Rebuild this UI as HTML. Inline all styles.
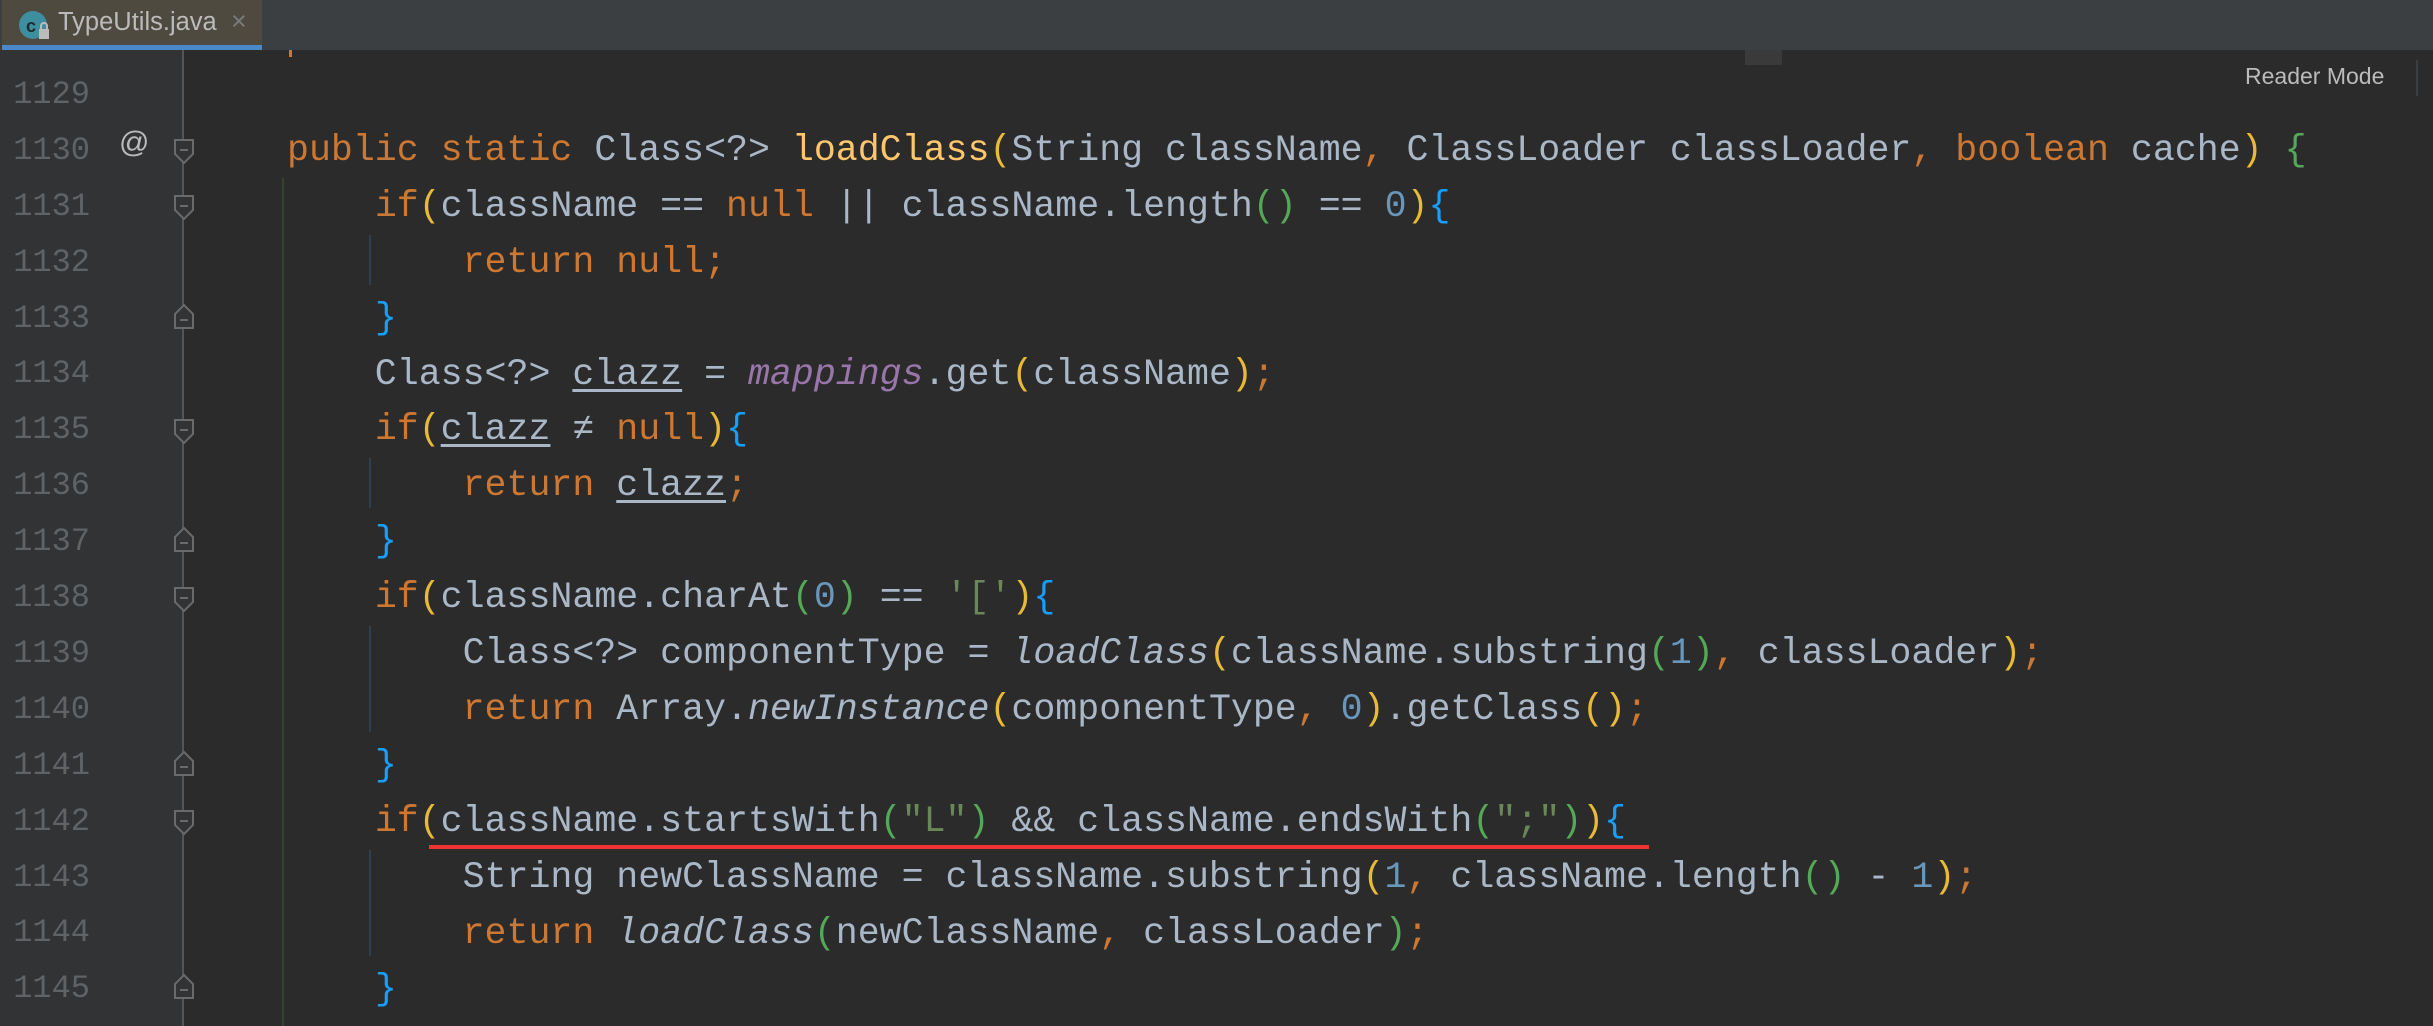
<!DOCTYPE html>
<html style="width:2433px;height:1026px;overflow:hidden"><head><meta charset="utf-8"><style>
body{margin:0;width:2433px;height:1026px;overflow:hidden;background:#2b2b2b;position:relative;font-family:"Liberation Mono",monospace}
.tabbar{position:absolute;left:0;top:0;width:2433px;height:50px;background:#3c3f41}
.tab{position:absolute;left:2px;top:0;width:260px;height:45px;background:#4e4a40}
.tabline{position:absolute;left:2px;top:45px;width:260px;height:5px;background:#4a88c7}
.gutter{position:absolute;left:0;top:50px;width:183px;height:976px;background:#313335}
.gline{position:absolute;left:182px;top:50px;width:2px;height:976px;background:#555}
.ln{position:absolute;left:0;width:90px;text-align:right;color:#606366;font-size:32px;line-height:56px}
.code{position:absolute;left:287px;top:67px;height:959px;overflow:hidden;font-size:36.6px;line-height:55.9px;color:#a9b7c6;white-space:pre}
.k{color:#cc7832}.y{color:#e8ba36}.g{color:#54a857}.b{color:#179fff}.n{color:#6897bb}.s{color:#6a8759}.p{color:#9876aa;font-style:italic}.i{font-style:italic}.u{text-decoration:underline;text-underline-offset:5px}
.guide{position:absolute;width:2px}
</style></head><body>
<div class="tabbar"></div>
<div class="tab"></div>
<div class="tabline"></div>
<svg style="position:absolute;left:18px;top:10px" width="34" height="32"><circle cx="15" cy="15" r="14" fill="#3d8fa0"/><text x="8" y="22" font-family="Liberation Sans" font-size="18" font-weight="bold" fill="#1f2a30">c</text><rect x="21" y="19" width="10" height="10" fill="#bbb"/><path d="M23 19v-3a3 3 0 0 1 6 0v3" stroke="#bbb" stroke-width="2" fill="none"/></svg>
<div style="position:absolute;left:58px;top:8px;font-family:'Liberation Sans',sans-serif;font-size:25.5px;color:#bbbbbb">TypeUtils.java</div>
<div style="position:absolute;left:231px;top:6px;font-family:'Liberation Sans',sans-serif;font-size:27px;color:#7a7a7a">×</div>
<div class="gutter"></div>
<div class="gline"></div>
<div style="position:absolute;left:289px;top:50px;width:3px;height:7px;background:#cc7832"></div>
<div style="position:absolute;left:1745px;top:50px;width:37px;height:15px;background:#3a3a3a"></div>
<div style="position:absolute;left:2245px;top:63px;font-family:'Liberation Sans',sans-serif;font-size:23px;color:#bbbbbb">Reader Mode</div>
<div style="position:absolute;left:2416px;top:60px;width:2px;height:36px;background:#3c3f41"></div>

<div class="ln" style="top:67px">1129</div>
<div class="ln" style="top:123px">1130</div>
<div class="ln" style="top:179px">1131</div>
<div class="ln" style="top:235px">1132</div>
<div class="ln" style="top:291px">1133</div>
<div class="ln" style="top:346px">1134</div>
<div class="ln" style="top:402px">1135</div>
<div class="ln" style="top:458px">1136</div>
<div class="ln" style="top:514px">1137</div>
<div class="ln" style="top:570px">1138</div>
<div class="ln" style="top:626px">1139</div>
<div class="ln" style="top:682px">1140</div>
<div class="ln" style="top:738px">1141</div>
<div class="ln" style="top:794px">1142</div>
<div class="ln" style="top:850px">1143</div>
<div class="ln" style="top:905px">1144</div>
<div class="ln" style="top:961px">1145</div>
<div style="position:absolute;left:119px;top:126px;font-family:'Liberation Sans',sans-serif;font-size:30px;color:#bbbbbb">@</div>

<svg style="position:absolute;left:170px;top:0" width="30" height="1026">
<g fill="#313335" stroke="#6a6a6a" stroke-width="2">
<path d="M5 140h18v14l-9 9l-9-9z"/><path d="M5 196h18v14l-9 9l-9-9z"/><path d="M5 420h18v14l-9 9l-9-9z"/><path d="M5 588h18v14l-9 9l-9-9z"/><path d="M5 811h18v14l-9 9l-9-9z"/>
<path d="M5 328h18v-14l-9-9l-9 9z"/><path d="M5 551h18v-14l-9-9l-9 9z"/><path d="M5 775h18v-14l-9-9l-9 9z"/><path d="M5 998h18v-14l-9-9l-9 9z"/>
</g>
<g stroke="#6a6a6a" stroke-width="2"><path d="M10 150h8M10 206h8M10 430h8M10 598h8M10 821h8M10 320h8M10 543h8M10 767h8M10 990h8"/></g>
</svg>

<div class="guide" style="left:282px;top:178px;height:848px;background:#34432f"></div>
<div class="guide" style="left:369px;top:235px;height:50px;background:#2f3f50"></div>
<div class="guide" style="left:369px;top:458px;height:50px;background:#2f3f50"></div>
<div class="guide" style="left:369px;top:626px;height:106px;background:#2f3f50"></div>
<div class="guide" style="left:369px;top:850px;height:106px;background:#2f3f50"></div>

<div class="code">
<span class="k">public static </span>Class&lt;?&gt; <span style="color:#ffc66d">loadClass</span><span class="y">(</span>String className<span class="k">, </span>ClassLoader classLoader<span class="k">, boolean </span>cache<span class="y">)</span> <span class="g">{</span>
    <span class="k">if</span><span class="y">(</span>className == <span class="k">null</span> || className.length<span class="g">()</span> == <span class="n">0</span><span class="y">)</span><span class="b">{</span>
        <span class="k">return null;</span>
    <span class="b">}</span>
    Class&lt;?&gt; <span class="u">clazz</span> = <span class="p">mappings</span>.get<span class="y">(</span>className<span class="y">)</span><span class="k">;</span>
    <span class="k">if</span><span class="y">(</span><span class="u">clazz</span> ≠ <span class="k">null</span><span class="y">)</span><span class="b">{</span>
        <span class="k">return </span><span class="u">clazz</span><span class="k">;</span>
    <span class="b">}</span>
    <span class="k">if</span><span class="y">(</span>className.charAt<span class="g">(</span><span class="n">0</span><span class="g">)</span> == <span class="s">'['</span><span class="y">)</span><span class="b">{</span>
        Class&lt;?&gt; componentType = <span class="i">loadClass</span><span class="y">(</span>className.substring<span class="g">(</span><span class="n">1</span><span class="g">)</span><span class="k">, </span>classLoader<span class="y">)</span><span class="k">;</span>
        <span class="k">return </span>Array.<span class="i">newInstance</span><span class="y">(</span>componentType<span class="k">, </span><span class="n">0</span><span class="y">)</span>.getClass<span class="y">()</span><span class="k">;</span>
    <span class="b">}</span>
    <span class="k">if</span><span class="y">(</span>className.startsWith<span class="g">(</span><span class="s">"L"</span><span class="g">)</span> &amp;&amp; className.endsWith<span class="g">(</span><span class="s">";"</span><span class="g">)</span><span class="y">)</span><span class="b">{</span>
        String newClassName = className.substring<span class="y">(</span><span class="n">1</span><span class="k">, </span>className.length<span class="g">()</span> - <span class="n">1</span><span class="y">)</span><span class="k">;</span>
        <span class="k">return </span><span class="i">loadClass</span><span class="g">(</span>newClassName<span class="k">, </span>classLoader<span class="g">)</span><span class="k">;</span>
    <span class="b">}</span></div>
<div style="position:absolute;left:429px;top:845px;width:1220px;height:4px;background:#ee3333"></div>
</body></html>
